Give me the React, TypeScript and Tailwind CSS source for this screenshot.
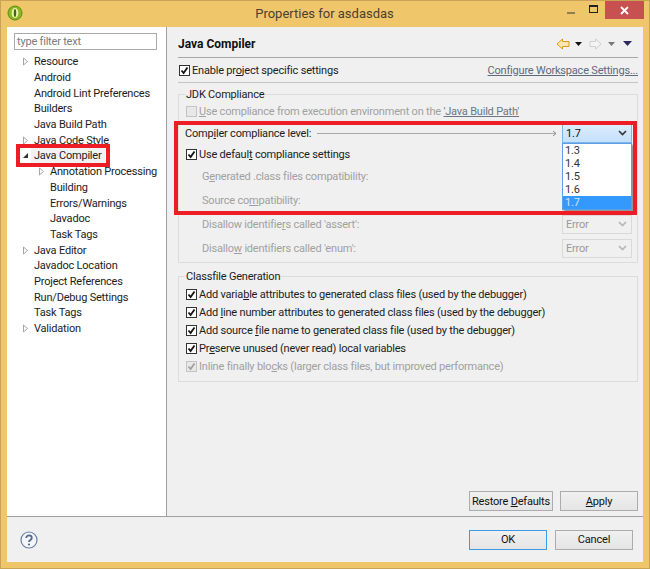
import type { ReactNode } from 'react';

const font = "font-['Roboto','Noto_Sans',sans-serif]";

const treeRows: { label: string; depth: 0 | 1; arrow?: 'closed' | 'open'; selected?: boolean }[] = [
  { label: 'Resource', depth: 0, arrow: 'closed' },
  { label: 'Android', depth: 0 },
  { label: 'Android Lint Preferences', depth: 0 },
  { label: 'Builders', depth: 0 },
  { label: 'Java Build Path', depth: 0 },
  { label: 'Java Code Style', depth: 0, arrow: 'closed' },
  { label: 'Java Compiler', depth: 0, arrow: 'open', selected: true },
  { label: 'Annotation Processing', depth: 1, arrow: 'closed' },
  { label: 'Building', depth: 1 },
  { label: 'Errors/Warnings', depth: 1 },
  { label: 'Javadoc', depth: 1 },
  { label: 'Task Tags', depth: 1 },
  { label: 'Java Editor', depth: 0, arrow: 'closed' },
  { label: 'Javadoc Location', depth: 0 },
  { label: 'Project References', depth: 0 },
  { label: 'Run/Debug Settings', depth: 0 },
  { label: 'Task Tags', depth: 0 },
  { label: 'Validation', depth: 0, arrow: 'closed' },
];

function TreeArrow({ kind }: { kind?: 'closed' | 'open' }) {
  return (
    <span className="w-[13px] shrink-0 flex items-center">
      {kind === 'closed' && (
        <svg width="7" height="9" viewBox="0 0 7 9" className="ml-[1px]">
          <path d="M1.5 1 L5.5 4.5 L1.5 8 Z" fill="#fff" stroke="#a6a6a6" />
        </svg>
      )}
      {kind === 'open' && (
        <svg width="7" height="7" viewBox="0 0 7 7" className="ml-[1px]">
          <path d="M6 1 L6 6 L1 6 Z" fill="#333" />
        </svg>
      )}
    </span>
  );
}

function Check({ disabled, checked = true }: { disabled?: boolean; checked?: boolean }) {
  return (
    <span
      className={`w-[11px] h-[11px] ml-px shrink-0 border flex items-center justify-center ${
        disabled ? 'border-[#c4c4c4] bg-[#e8e8e8]' : 'border-[#333] bg-white'
      }`}
    >
      {checked && (
        <svg width="9" height="9" viewBox="0 0 9 9">
          <path
            d="M1.5 4.5 L3.6 7 L7.5 1.5"
            fill="none"
            stroke={disabled ? '#a0a0a0' : '#111'}
            strokeWidth="1.8"
          />
        </svg>
      )}
    </span>
  );
}

function ComboChevron({ color }: { color: string }) {
  return (
    <svg width="9" height="6" viewBox="0 0 9 6">
      <path d="M1 1 L4.5 4.5 L8 1" fill="none" stroke={color} strokeWidth="1.6" />
    </svg>
  );
}

function DisabledCombo() {
  return (
    <div className="w-[70px] h-[19px] border border-[#d9d9d9] flex items-center justify-between pl-[3px] pr-[4px] text-[#9a9a9a]">
      Error
      <ComboChevron color="#b5b5b5" />
    </div>
  );
}

function Button({ children, w, primary }: { children: ReactNode; w: string; primary?: boolean }) {
  return (
    <div
      className={`${w} h-[20px] border flex items-center justify-center whitespace-nowrap bg-gradient-to-b from-[#f0f0f0] to-[#e5e5e5] text-[#111] ${
        primary ? 'border-[#3c9be8]' : 'border-[#acacac]'
      }`}
    >
      <span>{children}</span>
    </div>
  );
}

function NavDrop({ color }: { color: string }) {
  return (
    <svg width="7" height="4" viewBox="0 0 7 4">
      <path d="M0 0 H7 L3.5 4 Z" fill={color} />
    </svg>
  );
}

function ClassRow({ children, disabled }: { children: ReactNode; disabled?: boolean }) {
  return (
    <div className={`h-[18px] flex items-center gap-[2px] ${disabled ? 'text-[#a0a0a0]' : ''}`}>
      <Check disabled={disabled} />
      <span>{children}</span>
    </div>
  );
}

export default function App() {
  return (
    <div
      className={`${font} relative w-[650px] h-[569px] overflow-hidden bg-[#f0c66a] shadow-[inset_0_0_0_1px_#c9a457] text-[11px] tracking-[-0.2px] leading-[15px] text-[#1c1c1c] flex flex-col`}
    >
      {/* title bar */}
      <div className="h-[27px] shrink-0 flex items-center">
        <svg width="16" height="16" viewBox="0 0 16 16" className="ml-[7px] mb-[1px]">
          <circle cx="8" cy="8" r="7" fill="#8cb820" stroke="#5f8a14" />
          <ellipse cx="8" cy="8" rx="3.4" ry="5" fill="#eaf3b0" />
          <ellipse cx="8" cy="8" rx="1.2" ry="4" fill="#3f6b10" />
        </svg>
        <div className="flex-1 text-center text-[13px] tracking-normal text-[#4a4030] pl-[59px] mb-[1px]">Properties for asdasdas</div>
        <div className="flex items-start h-full">
          <div className="w-[8px] h-[2px] bg-[#8f7d58] mt-[12px] mr-[14px]" />
          <div className="w-[9px] h-[8px] border border-[#222] border-t-[2px] mt-[5px] mr-[7px]" />
          <div className="w-[39px] h-[18px] mt-[1px] bg-[#c75050] flex items-center justify-center mr-[6px]">
            <svg width="9" height="9" viewBox="0 0 9 9">
              <path d="M1 1 L8 8 M8 1 L1 8" stroke="#fff" strokeWidth="1.8" />
            </svg>
          </div>
        </div>
      </div>

      {/* client area */}
      <div className="mx-[7px] mb-[7px] flex-1 bg-[#f0f0f0] flex flex-col min-h-0">
        <div className="flex flex-1 min-h-0">
          {/* tree */}
          <div className="w-[160px] shrink-0 bg-white border-r border-[#a0a0a0]">
            <div className="ml-[7px] mt-[6px] w-[143px] h-[17px] border border-[#a9a9a9] flex items-center px-[2px] text-[#7a7a7a]">
              type filter text
            </div>
            <div className="mt-[4px]">
              {treeRows.map((row, i) => (
                <div
                  key={i}
                  className={`h-[15.7px] flex items-center whitespace-nowrap ${row.depth === 1 ? 'pl-[30px]' : 'pl-[14px]'}`}
                >
                  <TreeArrow kind={row.arrow} />
                  <span className={row.selected ? 'bg-[#f2f2f2] -ml-[3px] pl-[3px] pr-[3px]' : ''}>{row.label}</span>
                </div>
              ))}
            </div>
          </div>

          {/* page */}
          <div className="flex-1 flex flex-col pl-[11px] pr-[5px]">
            <div className="h-[31px] shrink-0 border-b border-[#a8a8a8] flex items-center justify-between">
              <span className="font-bold text-[12px] tracking-normal text-[#111] mt-[4px]">Java Compiler</span>
              <div className="flex items-center mt-[3px] mr-[6px]">
                <svg width="14" height="12" viewBox="0 0 14 12">
                  <path d="M6.5 1 L1 6 L6.5 11 V8.5 H13 V3.5 H6.5 Z" fill="#fbe7ae" stroke="#d99a1c" />
                </svg>
                <span className="ml-[5px] mr-[7px] flex"><NavDrop color="#111" /></span>
                <svg width="13" height="12" viewBox="0 0 13 12">
                  <path d="M6.5 1 L12 6 L6.5 11 V8.5 H1 V3.5 H6.5 Z" fill="#f4f4f4" stroke="#cfcfcf" />
                </svg>
                <span className="ml-[6px] mr-[8px] flex"><NavDrop color="#777" /></span>
                <svg width="9" height="5" viewBox="0 0 9 5">
                  <path d="M0 0 H9 L4.5 5 Z" fill="#2c2a5c" />
                </svg>
              </div>
            </div>
            <div className="h-[24px] shrink-0 flex items-center justify-between">
              <div className="flex items-center gap-[2px]">
                <Check />
                <span>Enable pr<u>o</u>ject specific settings</span>
              </div>
              <span className="underline text-[#5c6a7c]">Configure Workspace Settings...</span>
            </div>
            <div className="h-px bg-[#c4c4c4] shrink-0" />

            {/* JDK Compliance */}
            <fieldset className="mt-[4px] border border-[#dcdcdc] pl-[6px] pr-[5px] pb-[4px] min-w-0">
              <legend className="px-[1px]">JDK Compliance</legend>
              <div className="h-[18px] flex items-center gap-[2px] text-[#a0a0a0]">
                <Check disabled checked={false} />
                <span>
                  <u>U</u>se compliance from execution environment on the{' '}
                  <span className="underline text-[#6b7686]">'Java Build Path'</span>
                </span>
              </div>
              <div className="h-[26px] flex items-center">
                <span className="whitespace-nowrap">Comp<u>i</u>ler compliance level:</span>
                <div className="flex-1 flex items-center ml-[6px] mr-[5px]">
                  <div className="flex-1 h-px bg-[#a8a8a8]" />
                  <svg width="5" height="7" viewBox="0 0 5 7" className="-ml-[4px]">
                    <path d="M1 1 L4 3.5 L1 6" fill="none" stroke="#8a8a8a" />
                  </svg>
                </div>
                <div className="relative w-[70px] h-[19px] shrink-0 border border-[#7eb4ea] bg-gradient-to-b from-[#dcecfc] to-[#c4e0fc] flex items-center justify-between pl-[3px] pr-[4px] text-[#111]">
                  1.7
                  <ComboChevron color="#333" />
                  <div className="absolute left-[-1px] top-[18px] w-[70px] h-[67px] bg-white border border-[#5aa0e6] shadow-[2px_2px_2px_rgba(0,0,0,0.4)] text-[#333] leading-[13px]">
                    {['1.3', '1.4', '1.5', '1.6', '1.7'].map((v) => (
                      <div
                        key={v}
                        className={`h-[13px] pl-[2px] ${v === '1.7' ? 'bg-[#3399ff] text-[#cfe6ff]' : ''}`}
                      >
                        {v}
                      </div>
                    ))}
                  </div>
                </div>
              </div>
              <div className="h-[16px] flex items-center gap-[2px]">
                <Check />
                <span>Use defaul<u>t</u> compliance settings</span>
              </div>
              <div className="h-[28px] flex items-center pl-[17px] text-[#a0a0a0]">
                <span>G<u>e</u>nerated .class files compatibility:</span>
              </div>
              <div className="h-[20px] flex items-center pl-[17px] text-[#a0a0a0]">
                <span>Source co<u>m</u>patibility:</span>
              </div>
              <div className="h-[28px] flex items-center justify-between pl-[17px] text-[#a0a0a0]">
                <span>Disallow identifie<u>r</u>s called 'assert':</span>
                <DisabledCombo />
              </div>
              <div className="h-[20px] flex items-center justify-between pl-[17px] text-[#a0a0a0]">
                <span>Disallo<u>w</u> identifiers called 'enum':</span>
                <DisabledCombo />
              </div>
            </fieldset>

            {/* Classfile Generation */}
            <fieldset className="mt-[6px] border border-[#dcdcdc] pl-[6px] pr-[5px] pb-[6px] pt-[1px] min-w-0">
              <legend className="px-[1px]">Classfile Generation</legend>
              <ClassRow>Add varia<u>b</u>le attributes to generated class files (used by the debugger)</ClassRow>
              <ClassRow>Add <u>l</u>ine number attributes to generated class files (used by the debugger)</ClassRow>
              <ClassRow>Add source <u>f</u>ile name to generated class file (used by the debugger)</ClassRow>
              <ClassRow>Pr<u>e</u>serve unused (never read) local variables</ClassRow>
              <ClassRow disabled>Inline finally blo<u>c</u>ks (larger class files, but improved performance)</ClassRow>
            </fieldset>

            <div className="flex-1 flex items-end justify-end gap-[7px] pb-[5px]">
              <Button w="w-[84px]">Restore <u>D</u>efaults</Button>
              <Button w="w-[78px]"><u>A</u>pply</Button>
            </div>
          </div>
        </div>

        {/* bottom bar */}
        <div className="h-[46px] shrink-0 border-t border-[#a0a0a0] flex items-center justify-between pl-[13px] pr-[10px]">
          <svg width="18" height="18" viewBox="0 0 18 18">
            <circle cx="9" cy="9" r="8" fill="#f4f6fa" stroke="#6a81a6" strokeWidth="1.2" />
            <path d="M6.2 7 C6.2 3.6 11.8 3.6 11.8 7 C11.8 9 9 9 9 11" fill="none" stroke="#54698c" strokeWidth="1.8" />
            <circle cx="9" cy="13.5" r="1.1" fill="#54698c" />
          </svg>
          <div className="flex gap-[8px]">
            <Button w="w-[78px]" primary>OK</Button>
            <Button w="w-[78px]">Cancel</Button>
          </div>
        </div>
      </div>

      {/* red annotation boxes */}
      <div className="absolute left-[16px] top-[144px] w-[94px] h-[23px] border-[4px] border-[#ee1c25]" />
      <div className="absolute left-[174px] top-[121px] w-[463px] h-[94px] border-[4px] border-[#ee1c25]" />
    </div>
  );
}
